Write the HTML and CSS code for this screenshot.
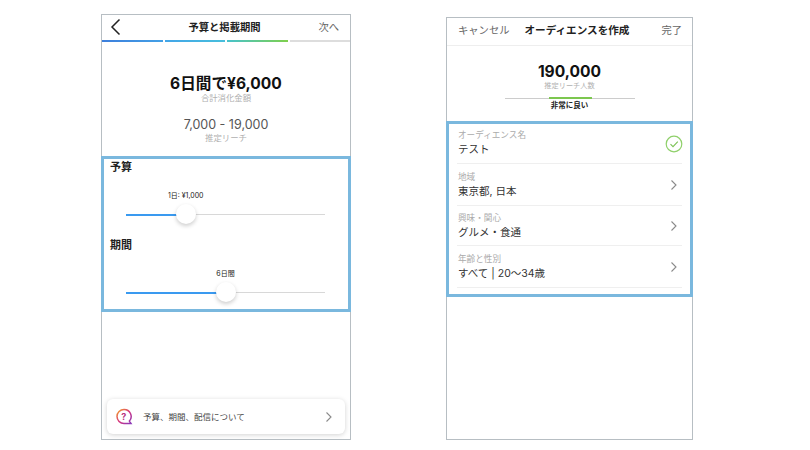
FILE: index.html
```html
<!DOCTYPE html>
<html lang="ja">
<head>
    <meta charset="UTF-8">
    <meta name="viewport" content="width=device-width, initial-scale=1.0">
    <title>予算と掲載期間</title>
    <link rel="stylesheet" href="styles.css">
</head>
<body>
    <div class="page">
        <div class="phone phone-budget">
            <div class="nav nav-budget">
                <svg class="back" width="12" height="18" viewBox="0 0 12 18"><path d="M9.5 1.5 2 9l7.5 7.5" fill="none" stroke="#222" stroke-width="1.5"/></svg>
                <span class="nav-title">予算と掲載期間</span>
                <span class="nav-link">次へ</span>
            </div>
            <div class="steps">
                <i class="step step-1"></i>
                <i class="step step-2"></i>
                <i class="step step-3"></i>
                <i class="step"></i>
            </div>
            <div class="summary">
                <div class="total">6日間で¥6,000</div>
                <div class="caption">合計消化金額</div>
                <div class="reach">7,000 - 19,000</div>
                <div class="caption">推定リーチ</div>
            </div>
            <div class="highlight sliders">
                <h3>予算</h3>
                <div class="slider">
                    <div class="slider-label" style="left: 30%">1日: ¥1,000</div>
                    <div class="track"><div class="fill" style="width: 30%"></div></div>
                    <div class="thumb" style="left: 30%"></div>
                </div>
                <h3 class="second">期間</h3>
                <div class="slider">
                    <div class="slider-label" style="left: 50%">6日間</div>
                    <div class="track"><div class="fill" style="width: 50%"></div></div>
                    <div class="thumb" style="left: 50%"></div>
                </div>
            </div>
            <div class="help-card">
                <svg class="help-icon" width="18" height="18" viewBox="0 0 18 18">
                    <defs>
                        <linearGradient id="ig" x1="0" y1="0" x2="1" y2="1">
                            <stop offset="0" stop-color="#f5a623"/>
                            <stop offset="0.5" stop-color="#d6337f"/>
                            <stop offset="1" stop-color="#8a3ab9"/>
                        </linearGradient>
                    </defs>
                    <path d="M9 1.5a7 7 0 1 0 0 14h7l-1.6-2.4A7 7 0 0 0 9 1.5Z" fill="none" stroke="url(#ig)" stroke-width="1.5"/>
                    <text x="8.8" y="12" text-anchor="middle" class="help-mark">?</text>
                </svg>
                <span class="help-text">予算、期間、配信について</span>
                <svg class="chevron" width="8" height="12" viewBox="0 0 8 12"><path d="m1.5 1.5 4.5 4.5-4.5 4.5" fill="none" stroke="#8a8a8a" stroke-width="1.1"/></svg>
            </div>
        </div>

        <div class="phone phone-audience">
            <div class="nav nav-audience">
                <span class="nav-link">キャンセル</span>
                <span class="nav-title">オーディエンスを作成</span>
                <span class="nav-link">完了</span>
            </div>
            <div class="audience-size">
                <div class="total">190,000</div>
                <div class="caption caption-small">推定リーチ人数</div>
                <div class="meter"><div class="meter-on"></div></div>
                <div class="meter-label">非常に良い</div>
            </div>
            <div class="highlight rows">
                <div class="row">
                    <div>
                        <div class="row-label">オーディエンス名</div>
                        <div class="row-value">テスト</div>
                    </div>
                    <svg class="check" width="18" height="18" viewBox="0 0 18 18"><circle cx="9" cy="9" r="7.8" fill="none" stroke="#8fd06a" stroke-width="1.2"/><path d="m5.5 9.2 2.5 2.5 4.8-5" fill="none" stroke="#7cc255" stroke-width="1.1"/></svg>
                </div>
                <div class="row">
                    <div>
                        <div class="row-label">地域</div>
                        <div class="row-value">東京都, 日本</div>
                    </div>
                    <svg class="chevron" width="8" height="12" viewBox="0 0 8 12"><path d="m1.5 1.5 4.5 4.5-4.5 4.5" fill="none" stroke="#8a8a8a" stroke-width="1.1"/></svg>
                </div>
                <div class="row">
                    <div>
                        <div class="row-label">興味・関心</div>
                        <div class="row-value">グルメ・食通</div>
                    </div>
                    <svg class="chevron" width="8" height="12" viewBox="0 0 8 12"><path d="m1.5 1.5 4.5 4.5-4.5 4.5" fill="none" stroke="#8a8a8a" stroke-width="1.1"/></svg>
                </div>
                <div class="row">
                    <div>
                        <div class="row-label">年齢と性別</div>
                        <div class="row-value">すべて | 20～34歳</div>
                    </div>
                    <svg class="chevron" width="8" height="12" viewBox="0 0 8 12"><path d="m1.5 1.5 4.5 4.5-4.5 4.5" fill="none" stroke="#8a8a8a" stroke-width="1.1"/></svg>
                </div>
            </div>
        </div>
    </div>
</body>
</html>
```

FILE: styles.css
```css
body {
    margin: 0;
    background: #fff;
    color: #222;
    font-family: Inter, "Noto Sans CJK JP", sans-serif;
}
.page {
    display: flex;
    align-items: flex-end;
    gap: 95px;
    width: 810px;
    height: 450px;
    box-sizing: border-box;
    padding: 0 0 10px 101px;
}
.phone {
    display: flex;
    flex-direction: column;
    box-sizing: border-box;
    border: 1px solid #b7bec3;
    background: #fff;
}
.phone-budget {
    width: 250px;
    height: 426px;
}
.phone-audience {
    width: 247px;
    height: 423px;
}

/* top bars */
.nav {
    display: grid;
    align-items: center;
    flex-shrink: 0;
    box-sizing: border-box;
}
.nav .nav-link:last-child {
    justify-self: end;
}
.nav-budget {
    grid-template-columns: 1fr auto 1fr;
    height: 25px;
    padding: 0 11px 2px 8px;
}
.nav-audience {
    grid-template-columns: auto auto 1fr;
    column-gap: 15px;
    height: 28px;
    padding: 0 10px 4px 11px;
    border-bottom: 1px solid #eee;
}
.nav-title {
    font-size: 10.3px;
    font-weight: 700;
}
.nav-audience .nav-title {
    font-size: 10.6px;
}
.nav-link {
    font-size: 10.3px;
    color: #666;
}
.steps {
    display: flex;
    gap: 2px;
    flex-shrink: 0;
}
.step {
    flex: 1;
    height: 2px;
    background: #ddd;
}
.step-1 {
    background: linear-gradient(to right, #3d7fdc, #43a0e6);
}
.step-2 {
    background: linear-gradient(to right, #43a5e8, #47bfdc);
}
.step-3 {
    background: linear-gradient(to right, #47c2cc, #7fd04c);
}

/* numbers */
.summary {
    height: 114px;
    padding-top: 32px;
    box-sizing: border-box;
    text-align: center;
    flex-shrink: 0;
}
.total {
    font-size: 15.6px;
    line-height: 20px;
    font-weight: 700;
    color: #111;
}
.summary .total {
    margin-bottom: -1px;
}
.caption {
    font-size: 8.4px;
    line-height: 11px;
    color: #b0b0b0;
}
.caption-small {
    margin-top: -2px;
    font-size: 7.2px;
}
.reach {
    margin-top: 12px;
    font-size: 12.5px;
    line-height: 17px;
    color: #555;
}

/* blue frame around the part being explained */
.highlight {
    box-sizing: border-box;
    margin: 0 -1px;
    border: 3px solid #7ab8de;
    flex-shrink: 0;
}

/* sliders */
.sliders {
    height: 156px;
    padding: 0 23px 0 6px;
}
.sliders h3 {
    margin: 0;
    font-size: 11px;
    line-height: 16px;
    font-weight: 700;
}
.sliders h3.second {
    margin-top: 17px;
}
.slider {
    position: relative;
    height: 45px;
    margin: 0 0 0 16px;
}
.slider-label {
    position: absolute;
    top: 16px;
    transform: translateX(-50%);
    font-size: 7px;
    line-height: 10px;
    white-space: nowrap;
}
.track {
    position: absolute;
    left: 0;
    right: 0;
    top: 39px;
    height: 1px;
    background: #d8d8d8;
}
.fill {
    height: 2px;
    background: #3a9af0;
}
.thumb {
    position: absolute;
    top: 29px;
    width: 20px;
    height: 20px;
    margin-left: -10px;
    border-radius: 50%;
    background: #fff;
    box-shadow: 0 2px 4px rgba(0, 0, 0, 0.2);
}

/* help card at the bottom */
.help-card {
    display: flex;
    align-items: center;
    height: 35px;
    margin: auto 5px 5px;
    padding: 0 12px 0 8px;
    border-radius: 6px;
    background: #fff;
    box-shadow: 0 1px 5px rgba(0, 0, 0, 0.18);
}
.help-icon {
    margin-right: 10px;
}
.help-mark {
    font-size: 9px;
    font-weight: 700;
    fill: #b8327f;
}
.help-text {
    flex: 1;
    font-size: 8.5px;
    color: #444;
    position: relative;
    top: -1px;
}

/* audience screen */
.audience-size {
    height: 75px;
    padding-top: 16px;
    box-sizing: border-box;
    text-align: center;
    flex-shrink: 0;
}
.meter {
    width: 130px;
    height: 1px;
    margin: 7px auto 0;
    background: #ccc;
    position: relative;
}
.meter-on {
    position: absolute;
    left: 44px;
    top: -1px;
    width: 43px;
    height: 2px;
    background: #7cc74f;
}
.meter-label {
    margin-top: 1px;
    font-size: 7.5px;
    line-height: 11px;
    font-weight: 700;
}
.rows {
    height: 176px;
    padding: 1px 8px 0;
}
.row {
    display: flex;
    align-items: flex-end;
    justify-content: space-between;
    box-sizing: border-box;
    padding: 0 4px 6px 1px;
    border-bottom: 1px solid #efefef;
}
.row:nth-child(1) {
    height: 39px;
}
.row:nth-child(2) {
    height: 42px;
}
.row:nth-child(3) {
    height: 40px;
    padding-bottom: 5px;
}
.row:nth-child(4) {
    height: 42px;
}
.row-label {
    font-size: 8.6px;
    line-height: 13px;
    color: #ababab;
}
.row-value {
    font-size: 10.5px;
    line-height: 15px;
    color: #333;
}
.row .chevron {
    margin-bottom: 8px;
}
.check {
    margin: 0 -5px 4px 0;
}
```
